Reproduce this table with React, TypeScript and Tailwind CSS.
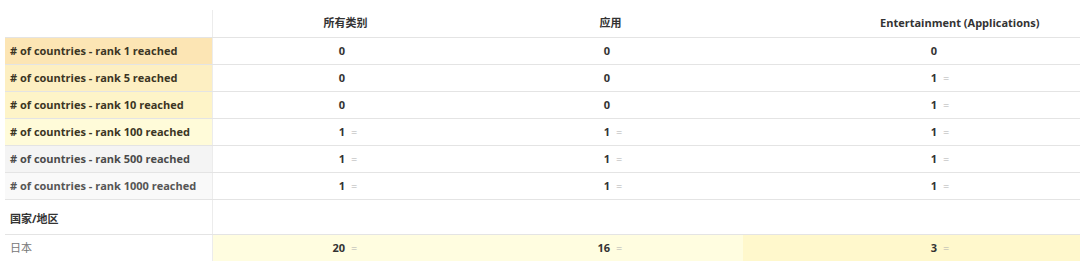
interface RankRow {
  label: string;
  labelBg: string;
  labelColor: string;
  values: { value: string; trend: boolean }[];
}

const rows: RankRow[] = [
  {
    label: "# of countries - rank 1 reached",
    labelBg: "bg-[#fce5b4]",
    labelColor: "text-[#3b3524]",
    values: [
      { value: "0", trend: false },
      { value: "0", trend: false },
      { value: "0", trend: false },
    ],
  },
  {
    label: "# of countries - rank 5 reached",
    labelBg: "bg-[#fdefc2]",
    labelColor: "text-[#3b3524]",
    values: [
      { value: "0", trend: false },
      { value: "0", trend: false },
      { value: "1", trend: true },
    ],
  },
  {
    label: "# of countries - rank 10 reached",
    labelBg: "bg-[#fef4c8]",
    labelColor: "text-[#3b3524]",
    values: [
      { value: "0", trend: false },
      { value: "0", trend: false },
      { value: "1", trend: true },
    ],
  },
  {
    label: "# of countries - rank 100 reached",
    labelBg: "bg-[#fffbd9]",
    labelColor: "text-[#3b3524]",
    values: [
      { value: "1", trend: true },
      { value: "1", trend: true },
      { value: "1", trend: true },
    ],
  },
  {
    label: "# of countries - rank 500 reached",
    labelBg: "bg-[#f4f4f4]",
    labelColor: "text-[#4a4a4a]",
    values: [
      { value: "1", trend: true },
      { value: "1", trend: true },
      { value: "1", trend: true },
    ],
  },
  {
    label: "# of countries - rank 1000 reached",
    labelBg: "bg-[#f9f9f9]",
    labelColor: "text-[#555555]",
    values: [
      { value: "1", trend: true },
      { value: "1", trend: true },
      { value: "1", trend: true },
    ],
  },
];

const font = {
  fontFamily: '"Open Sans", "Noto Sans CJK SC", sans-serif',
};

function ValueCell({
  value,
  trend,
  split,
  className,
}: {
  value: string;
  trend: boolean;
  split: string;
  className: string;
}) {
  return (
    <div className={`flex items-center h-full ${className}`}>
      <div className={`${split} text-right font-bold text-[11px] text-[#333]`}>
        {value}
      </div>
      <div className="pl-[6px] text-[11px] text-[#b0b0b0]">
        {trend ? "=" : ""}
      </div>
    </div>
  );
}

export default function App() {
  return (
    <div className="w-[1080px] h-[270px] bg-white overflow-hidden" style={font}>
      <div className="ml-[5px] mt-[10px]">
        {/* header */}
        <div className="flex h-[28px] border-b border-[#e4e4e4]">
          <div className="w-[208px] border-r border-[#ececec]" />
          <div className="w-[265px] flex items-center justify-center text-[11px] font-bold text-[#333]">
            所有类别
          </div>
          <div className="w-[265px] flex items-center justify-center text-[11px] font-bold text-[#333]">
            应用
          </div>
          <div className="flex-1 flex items-center pl-[137px] text-[11px] font-bold text-[#333]">
            Entertainment (Applications)
          </div>
        </div>

        {rows.map((row) => (
          <div key={row.label} className="flex h-[27px] border-b border-[#e4e4e4]">
            <div
              className={`w-[208px] flex items-center pl-[5px] border-r border-[#ececec] text-[11px] font-bold ${row.labelBg} ${row.labelColor}`}
            >
              {row.label}
            </div>
            <ValueCell {...row.values[0]} split="w-[132px]" className="w-[265px]" />
            <ValueCell {...row.values[1]} split="w-[132px]" className="w-[265px]" />
            <ValueCell {...row.values[2]} split="w-[194px]" className="flex-1" />
          </div>
        ))}

        {/* section */}
        <div className="flex h-[35px] border-b border-[#e4e4e4]">
          <div className="w-[208px] flex items-end pb-[7px] pl-[5px] border-r border-[#ececec] text-[11px] font-bold text-[#333]">
            国家/地区
          </div>
          <div className="flex-1" />
        </div>

        <div className="flex h-[26px]">
          <div className="w-[208px] flex items-center pl-[5px] border-r border-[#ececec] text-[11px] text-[#777]">
            日本
          </div>
          <ValueCell value="20" trend split="w-[132px]" className="w-[265px] bg-[#fffde0]" />
          <ValueCell value="16" trend split="w-[132px]" className="w-[265px] bg-[#fffde0]" />
          <ValueCell value="3" trend split="w-[194px]" className="flex-1 bg-[#fff8cc]" />
        </div>
      </div>
    </div>
  );
}
